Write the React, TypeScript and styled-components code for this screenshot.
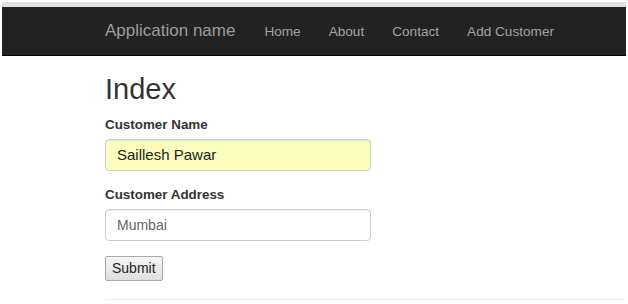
import React from "react";
import styled, { createGlobalStyle } from "styled-components";

const Global = createGlobalStyle`
  html, body { margin: 0; padding: 0; background: #fff; }
  body { font-family: "Liberation Sans", Arial, sans-serif; color: #333; }
  * { box-sizing: border-box; }
`;

const Frame = styled.div`
  padding: 2px 2px 0 2px;
  width: 628px;
  height: 304px;
  overflow: hidden;
`;

const TopStripe = styled.div`
  height: 5px;
  background: #e2e2e2;
`;

const NavBar = styled.nav`
  height: 49px;
  background: #222;
  border-bottom: 1px solid #080808;
  display: flex;
  align-items: center;
  padding-left: 103px;
`;

const Brand = styled.a`
  font-size: 17px;
  color: #9d9d9d;
  text-decoration: none;
  margin-right: 29px;
`;

const NavLinks = styled.ul`
  list-style: none;
  margin: 0;
  padding: 0;
  display: flex;
  gap: 28px;
`;

const NavLink = styled.a`
  font-size: 13.6px;
  color: #a3a3a3;
  text-decoration: none;
`;

const Container = styled.main`
  padding-left: 103px;
`;

const Title = styled.h2`
  font-size: 29px;
  font-weight: 400;
  margin: 18px 0 11px 0;
  line-height: 1.1;
`;

const Field = styled.div<{ $gap: number }>`
  margin-bottom: ${(p) => p.$gap}px;
  display: flex;
  flex-direction: column;
`;

const Label = styled.label`
  font-size: 13.4px;
  font-weight: 700;
  margin-bottom: 7px;
  color: #333;
`;

const Input = styled.input<{ $filled?: boolean }>`
  width: 266px;
  height: 32px;
  padding: 6px 11px;
  font-family: "Liberation Sans", Arial, sans-serif;
  font-size: ${(p) => (p.$filled ? "15px" : "14px")};
  color: ${(p) => (p.$filled ? "#222" : "#666")};
  background: ${(p) => (p.$filled ? "#fafdbe" : "#fff")};
  border: 1px solid #ccc;
  border-radius: 4px;
  box-shadow: inset 0 1px 1px rgba(0,0,0,.075);
`;

const Button = styled.button`
  font-family: "Liberation Sans", Arial, sans-serif;
  font-size: 14px;
  color: #222;
  padding: 3px 6px;
  height: 25px;
  border: 1px solid #a9a9a9;
  border-radius: 2px;
  background: linear-gradient(#f6f6f6, #dedede);
`;

const Rule = styled.hr`
  margin: 18px 0 0 0;
  border: 0;
  border-top: 1px solid #eee;
`;

export default function App() {
  return (
    <>
      <Global />
      <Frame>
        <TopStripe />
        <NavBar>
          <Brand href="#">Application name</Brand>
          <NavLinks>
            <li><NavLink href="#">Home</NavLink></li>
            <li><NavLink href="#">About</NavLink></li>
            <li><NavLink href="#">Contact</NavLink></li>
            <li><NavLink href="#">Add Customer</NavLink></li>
          </NavLinks>
        </NavBar>
        <Container>
          <Title>Index</Title>
          <Field $gap={16}>
            <Label>Customer Name</Label>
            <Input $filled defaultValue="Saillesh Pawar" />
          </Field>
          <Field $gap={15}>
            <Label>Customer Address</Label>
            <Input defaultValue="Mumbai" />
          </Field>
          <Button>Submit</Button>
          <Rule />
        </Container>
      </Frame>
    </>
  );
}
